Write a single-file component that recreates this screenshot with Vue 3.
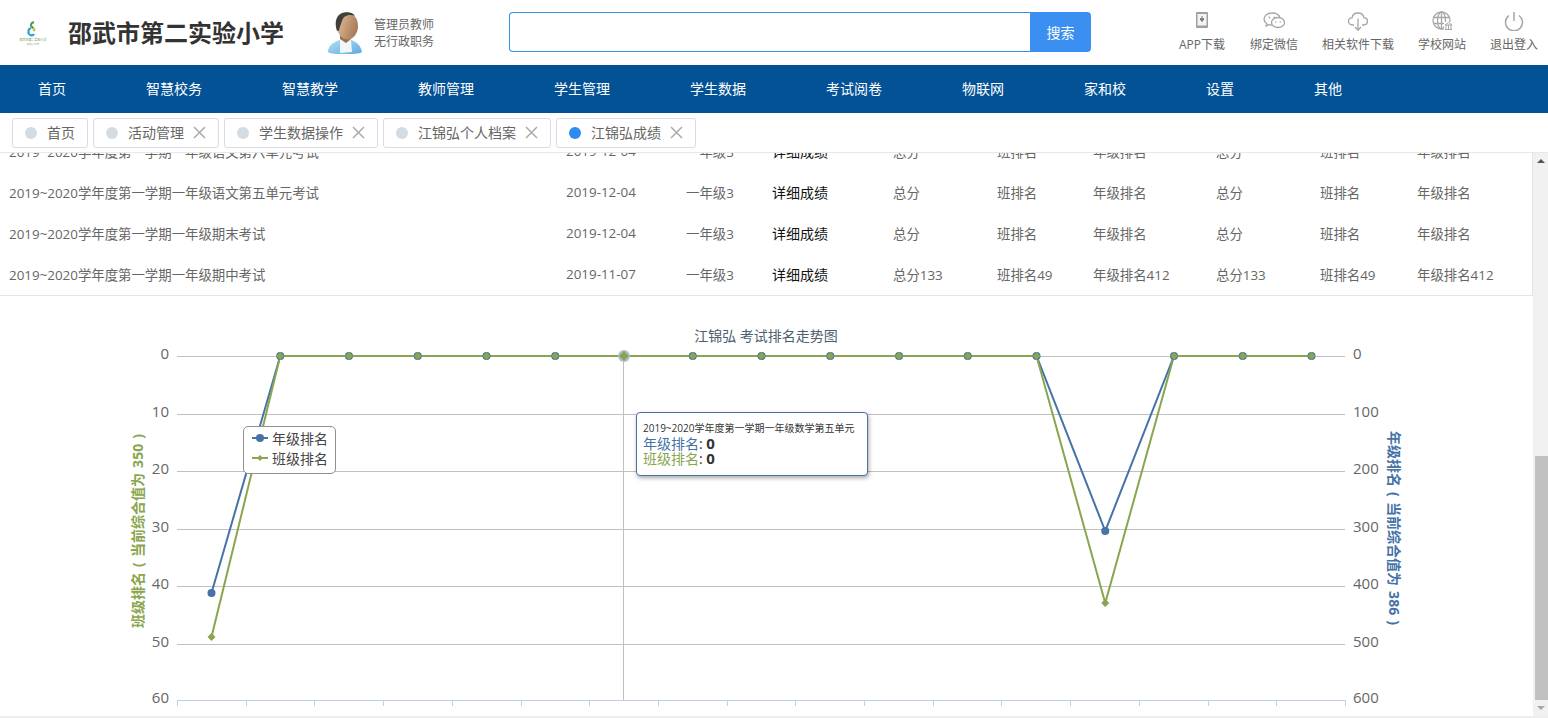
<template>
  <div class="page">
    <header class="top">
      <div class="logo">
        <svg width="28" height="28" viewBox="0 0 28 28">
          <path d="M15 3c-3 1-4 3-2 5s3 2 2 4" fill="none" stroke="#4a9a52" stroke-width="2" />
          <path d="M12 9c-3 1-3 4-2 6 1 1.500 4 2 5 0" fill="none" stroke="#2f9fd0" stroke-width="2.200" />
          <circle cx="15" cy="10" r="1.500" fill="#e8c93c" />
          <text x="14" y="22" text-anchor="middle" class="logo-name">邵武市第二实验小学</text>
          <text x="14" y="26" text-anchor="middle" class="logo-sub">实验小学校</text>
        </svg>
      </div>
      <h1 class="school">邵武市第二实验小学</h1>
      <svg class="avatar" width="34" height="42" viewBox="0 0 34 42">
        <defs>
          <linearGradient id="skin" x1="0" x2="1" y1="0" y2="0.400">
            <stop offset="0" stop-color="#e6c29c" />
            <stop offset="1" stop-color="#a97d5a" />
          </linearGradient>
          <linearGradient id="shirt" x1="0" x2="1" y1="0" y2="1">
            <stop offset="0" stop-color="#b4def5" />
            <stop offset="1" stop-color="#5fabdf" />
          </linearGradient>
        </defs>
        <path d="M0 40c0-6 5-10 12-12l5 3 6-3c6 2 10 6 11 12-3 2-8 2-17 2S3 42 0 40z" fill="url(#shirt)" />
        <path d="M12 27l5 4 6-3 1 12-12 1z" fill="#f2f6f8" />
        <path d="M12 20h11v7l-5 4-6-4z" fill="#96704f" />
        <ellipse cx="19.500" cy="14" rx="10.500" ry="13.500" fill="url(#skin)" />
        <path d="M9 19C6 11 8 2 16 .5c5-.8 9 .5 11 3-5-1-8-.5-10 1-3 2-3 6-5 10l-1 4z" fill="#3f3f3c" />
      </svg>
      <div class="role">
        <p>管理员教师</p>
        <p>无行政职务</p>
      </div>
      <div class="search">
        <input class="search-input" type="text" />
        <button class="search-btn">搜索</button>
      </div>
      <div class="tools">
        <a v-for="t in tools" :key="t.label" class="tool">
          <svg width="24" height="22" viewBox="0 0 24 22" fill="none" stroke="#a6a6a6" stroke-width="1.300">
            <g v-if="t.icon === 'app'">
              <rect x="6" y="3" width="12" height="16" rx="1" fill="#a0a0a0" stroke="none" />
              <rect x="7.500" y="5" width="9" height="11.500" fill="#f4f4f4" stroke="none" />
              <path d="M12 7v4M10 9.800l2 2.700 2-2.700z" stroke="#777" fill="#777" stroke-width="1" />
            </g>
            <g v-else-if="t.icon === 'wx'">
              <path d="M10 4C5.500 4 2 6.600 2 10c0 2 1.100 3.600 2.800 4.700l-.7 2.200 2.600-1.300c1 .3 2 .4 3.300.4" />
              <path d="M18 9C17.300 6 14 4 10 4" />
              <ellipse cx="16" cy="13.500" rx="6.500" ry="5" />
              <circle cx="7.500" cy="8.500" r=".9" fill="#a6a6a6" stroke="none" />
              <circle cx="12.500" cy="8.500" r=".9" fill="#a6a6a6" stroke="none" />
              <circle cx="13.800" cy="13" r=".8" fill="#a6a6a6" stroke="none" />
              <circle cx="18.200" cy="13" r=".8" fill="#a6a6a6" stroke="none" />
            </g>
            <g v-else-if="t.icon === 'cloud'">
              <path d="M8 16H6.500C4 16 2.500 14.300 2.500 12.300S4 8.800 6 8.800C6.500 5.800 9 4 12 4s5.500 2 6 4.800c2 0 3.500 1.600 3.500 3.500S20 16 17.500 16H16" />
              <path d="M12 9.500V21M9 18l3 3.200 3-3.200" />
            </g>
            <g v-else-if="t.icon === 'web'">
              <circle cx="11.500" cy="11.500" r="8.500" />
              <ellipse cx="11.500" cy="11.500" rx="4" ry="8.500" />
              <path d="M11.500 3v17M3.500 8.500h16M3.500 14.500h16" />
              <rect x="14" y="13" width="8" height="8" fill="#fff" stroke="none" />
              <path d="M15 20.500h7M16 20v-4M18.500 20v-4M21 20v-4M15 16l3.500-2.500L22 16z" stroke-width="1" />
            </g>
            <g v-else>
              <path d="M7 6.500a8.500 8.500 0 1 0 10 0" stroke-width="1.500" />
              <path d="M12 3v9" stroke-width="1.500" />
            </g>
          </svg>
          <span>{{ t.label }}</span>
        </a>
      </div>
    </header>

    <nav class="menu">
      <a v-for="m in menus" :key="m">{{ m }}</a>
    </nav>

    <div class="tabs">
      <div v-for="(t, i) in tabs" :key="t" class="tab" :class="{ on: i === tabs.length - 1 }">
        <i class="dot"></i>
        <span class="tab-name">{{ t }}</span>
        <svg v-if="i > 0" class="close" width="13" height="13" viewBox="0 0 13 13">
          <path d="M1 1l11 11M12 1L1 12" stroke="#aaa" stroke-width="1.500" fill="none" />
        </svg>
      </div>
    </div>

    <div class="body">
      <main class="scroll">
        <section class="table">
          <div v-for="(r, i) in rows" :key="i" class="row">
            <span>{{ r.name }}</span>
            <span>{{ r.date }}</span>
            <span>一年级3</span>
            <span class="detail">详细成绩</span>
            <span>总分{{ r.score }}</span>
            <span>班排名{{ r.cls }}</span>
            <span>年级排名{{ r.grade }}</span>
            <span>总分{{ r.score }}</span>
            <span>班排名{{ r.cls }}</span>
            <span>年级排名{{ r.grade }}</span>
          </div>
        </section>

        <section class="chart">
          <svg width="1533" height="420" viewBox="0 296 1533 420">
            <text x="766" y="341" text-anchor="middle" class="title">江锦弘 考试排名走势图</text>
            <line v-for="y in gridY" :key="y" x1="177" x2="1345" :y1="y + 0.5" :y2="y + 0.5" stroke="#c0c0c0" />
            <path :d="tickPath" stroke="#c0d0e0" fill="none" />
            <text v-for="(y, i) in gridY" :key="'l' + y" x="169" :y="y + 3" text-anchor="end" class="tick">{{ i * 10 }}</text>
            <text v-for="(y, i) in gridY" :key="'r' + y" x="1353" :y="y + 3" class="tick">{{ i * 100 }}</text>
            <text class="axis green" transform="translate(143 531) rotate(-90)" text-anchor="middle">班级排名 ( 当前综合值为 350 )</text>
            <text class="axis blue" transform="translate(1389 528) rotate(90)" text-anchor="middle">年级排名 ( 当前综合值为 386 )</text>

            <line x1="623.500" x2="623.500" y1="356" y2="700" stroke="#c0c0c0" />

            <polyline :points="line(blue)" fill="none" stroke="#4572a7" stroke-width="2" />
            <polyline :points="line(green)" fill="none" stroke="#89a54e" stroke-width="2" />
            <circle v-for="(y, i) in blue" :key="'b' + i" :cx="xAt(i)" :cy="y" r="4" fill="#4572a7" />
            <circle :cx="xAt(6)" cy="356" r="6" fill="#aebfd6" />
            <path v-for="(y, i) in green" :key="'g' + i" :d="diamond(xAt(i), y, i === 6 ? 5 : 4)" fill="#89a54e" />
          </svg>

          <div class="legend">
            <div class="legend-item">
              <svg width="16" height="10" viewBox="0 0 16 10"><path d="M0 5h16" stroke="#4572a7" stroke-width="2" /><circle cx="8" cy="5" r="4" fill="#4572a7" /></svg>
              <span>年级排名</span>
            </div>
            <div class="legend-item">
              <svg width="16" height="10" viewBox="0 0 16 10"><path d="M0 5h16" stroke="#89a54e" stroke-width="2" /><path d="M8 2l3 3-3 3-3-3z" fill="#89a54e" /></svg>
              <span>班级排名</span>
            </div>
          </div>

          <div class="tip">
            <div class="tip-head">2019~2020学年度第一学期一年级数学第五单元</div>
            <div class="tip-line"><span class="c-blue">年级排名</span>: <b>0</b></div>
            <div class="tip-line"><span class="c-green">班级排名</span>: <b>0</b></div>
          </div>
        </section>
      </main>

      <aside class="bar">
        <i class="arrow up"></i>
        <div class="track"><div class="thumb"></div></div>
        <i class="arrow down"></i>
      </aside>
    </div>
  </div>
</template>

<script setup>
const tools = [
  { label: "APP下载", icon: "app" },
  { label: "绑定微信", icon: "wx" },
  { label: "相关软件下载", icon: "cloud" },
  { label: "学校网站", icon: "web" },
  { label: "退出登入", icon: "off" },
];

const menus = ["首页", "智慧校务", "智慧教学", "教师管理", "学生管理", "学生数据", "考试阅卷", "物联网", "家和校", "设置", "其他"];
const tabs = ["首页", "活动管理", "学生数据操作", "江锦弘个人档案", "江锦弘成绩"];

const rows = [
  { name: "2019~2020学年度第一学期一年级语文第六单元考试", date: "2019-12-04", score: "", cls: "", grade: "" },
  { name: "2019~2020学年度第一学期一年级语文第五单元考试", date: "2019-12-04", score: "", cls: "", grade: "" },
  { name: "2019~2020学年度第一学期一年级期末考试", date: "2019-12-04", score: "", cls: "", grade: "" },
  { name: "2019~2020学年度第一学期一年级期中考试", date: "2019-11-07", score: "133", cls: "49", grade: "412" },
];

const gridY = [356, 414, 471, 529, 586, 644, 700];

// 17 exam points, most of them at rank 0
const blue = Array(17).fill(356);
blue[0] = 593;
blue[13] = 531;
const green = Array(17).fill(356);
green[0] = 637;
green[13] = 603;

const xAt = (i) => 211.5 + i * 68.75;
const line = (ys) => ys.map((y, i) => `${xAt(i)},${y}`).join(" ");
const diamond = (x, y, r) => `M${x} ${y - r}L${x + r} ${y}L${x} ${y + r}L${x - r} ${y}Z`;

let tickPath = "M177.5 700.5H1345.5";
for (let i = 0; i <= 17; i++) {
  const x = Math.round(177 + i * 68.7) + 0.5;
  tickPath += `M${x} 700V706`;
}
</script>

<style>
html,
body {
  margin: 0;
  overflow: hidden;
}
</style>

<style scoped>
.page {
  width: 1548px;
  height: 718px;
  display: flex;
  flex-direction: column;
  font-family: "Open Sans", "Noto Sans CJK SC", sans-serif;
  font-size: 13.4px;
  color: #666;
  background: #fff;
}

.top {
  height: 65px;
  flex: none;
  display: flex;
  align-items: center;
}

.logo {
  width: 28px;
  margin-left: 19px;
  height: 28px;
}

.logo-name {
  font-size: 3px;
  fill: #6f9a50;
}

.logo-sub {
  font-size: 2.500px;
  fill: #aaa;
}

.school {
  margin: 0 0 0 21px;
  width: 216px;
  font-size: 24px;
  line-height: 32px;
  font-weight: 700;
  color: #333;
  white-space: nowrap;
}

.avatar {
  margin-left: 44px;
}

.role {
  margin-left: 12px;
  width: 135px;
  font-size: 12px;
  line-height: 17px;
  padding-top: 1px;
}

.role p {
  margin: 0;
}

.search {
  display: flex;
  width: 582px;
  height: 40px;
  margin-bottom: 2px;
}

.search-input {
  flex: 1;
  box-sizing: border-box;
  border: 1px solid #3a8ee6;
  border-right: 0;
  border-radius: 4px 0 0 4px;
  outline: none;
}

.search-btn {
  width: 61px;
  border: 0;
  border-radius: 0 4px 4px 0;
  background: #3a8ff0;
  color: #fff;
  font: inherit;
  font-size: 14px;
}

.tools {
  margin-left: 87px;
  display: flex;
  gap: 24px;
  align-self: flex-start;
  padding-top: 9px;
}

.tool {
  min-width: 48px;
  display: flex;
  flex-direction: column;
  align-items: center;
  font-size: 12px;
  line-height: 16px;
  white-space: nowrap;
}

.tool span {
  margin-top: 6px;
}

.menu {
  height: 48px;
  flex: none;
  box-sizing: border-box;
  background: #045296;
  display: flex;
  align-items: center;
  padding: 0 0 3px 38px;
  gap: 80px;
  color: #fff;
  font-size: 14px;
}

.tabs {
  height: 40px;
  flex: none;
  box-sizing: border-box;
  display: flex;
  align-items: center;
  gap: 5px;
  padding: 0 0 0 12px;
  border-bottom: 1px solid #e8e8e8;
  font-size: 14px;
}

.tab {
  height: 30px;
  box-sizing: border-box;
  border: 1px solid #d8dce5;
  border-radius: 3px;
  display: flex;
  align-items: center;
  padding: 0 12px;
  white-space: nowrap;
}

.tab-name {
  margin-bottom: 2px;
}

.dot {
  width: 12px;
  height: 12px;
  border-radius: 50%;
  background: #d3dce3;
  margin-right: 10px;
}

.tab.on .dot {
  background: #2d8cf0;
}

.close {
  margin-left: 9px;
}

.body {
  flex: 1;
  min-height: 0;
  display: flex;
  border-bottom: 2px solid #eee;
}

.scroll {
  width: 1533px;
  overflow: hidden;
}

.table {
  margin-top: -22px;
  border-right: 1px solid #dfe4f0;
  border-bottom: 1px solid #dfe4f0;
}

.row {
  height: 41px;
  box-sizing: border-box;
  padding: 0 0 2px 9px;
  display: grid;
  grid-template-columns: 557px 120px 86px 121px 104px 96px 123px 104px 97px 1fr;
  align-items: center;
  white-space: nowrap;
}

.detail {
  color: #111;
  font-size: 14px;
}

.chart {
  position: relative;
  height: 420px;
}

.chart svg {
  display: block;
}

.title {
  font-size: 14px;
  fill: #4d5e70;
}

.tick {
  font-size: 15px;
  fill: #666;
}

.axis {
  font-size: 14px;
  font-weight: 700;
  word-spacing: 1.5px;
}

.green {
  fill: #89a54e;
}

.blue {
  fill: #4572a7;
}

.legend {
  position: absolute;
  left: 243px;
  top: 130px;
  width: 93px;
  height: 48px;
  box-sizing: border-box;
  background: #fff;
  border: 1px solid #909090;
  border-radius: 5px;
  padding: 1px 0 0 8px;
  color: #444;
  font-size: 14px;
}

.legend-item {
  display: flex;
  align-items: center;
  gap: 4px;
  height: 20px;
  white-space: nowrap;
}

.tip {
  position: absolute;
  left: 636px;
  top: 116px;
  width: 232px;
  height: 64px;
  box-sizing: border-box;
  background: #fff;
  border: 1px solid #4572a7;
  border-radius: 4px;
  box-shadow: 1px 2px 4px rgba(0, 0, 0, 0.35);
  padding: 8px 6px 0;
  color: #333;
  white-space: nowrap;
}

.tip-head {
  font-size: 10px;
  line-height: 15px;
}

.tip-line {
  font-size: 14px;
  line-height: 15px;
}

.tip-line b {
  font-size: 15px;
}

.c-blue {
  color: #4572a7;
}

.c-green {
  color: #89a54e;
}

.bar {
  width: 15px;
  background: #f1f1f1;
  display: flex;
  flex-direction: column;
  align-items: center;
}

.track {
  flex: 1;
  width: 100%;
  display: flex;
  flex-direction: column;
  justify-content: flex-end;
}

.thumb {
  height: 244px;
  margin-left: 2px;
  background: #c1c1c1;
}

.arrow {
  width: 0;
  height: 0;
  border-left: 4px solid transparent;
  border-right: 4px solid transparent;
  margin: 6px 0;
}

.up {
  border-bottom: 4px solid #555;
}

.down {
  border-top: 4px solid #a8a8a8;
}
</style>
